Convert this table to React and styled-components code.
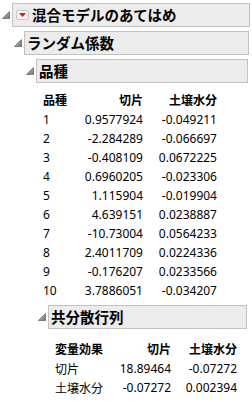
import React from "react";
import styled, { createGlobalStyle } from "styled-components";

const Global = createGlobalStyle`
  html, body { margin: 0; padding: 0; background: #ffffff; }
  body { font-family: "Noto Sans", "Noto Sans CJK JP", sans-serif; color: #000; }
`;

const Page = styled.div`
  width: 252px;
  box-sizing: border-box;
  padding: 3px 2px 0 0;
`;

const NodeWrap = styled.div`
  display: flex;
  align-items: flex-start;
  gap: 2px;
  padding-left: 2px;
  margin-top: ${(p) => p.$top || 0}px;
`;

const Disclosure = styled.div`
  flex: none;
  width: 8px;
  height: 24px;
  display: flex;
  align-items: center;
`;

const NodeBody = styled.div`
  flex: 1;
  min-width: 0;
`;

const Header = styled.div`
  height: 24px;
  box-sizing: border-box;
  border: 1px solid #c2c2c2;
  background: #ececec;
  display: flex;
  align-items: center;
  gap: 3px;
  padding-left: ${(p) => (p.$button ? 3 : 2)}px;
`;

const Title = styled.span`
  font-family: "Noto Sans CJK JP", sans-serif;
  font-weight: 700;
  font-size: 14.5px;
  line-height: 1;
  white-space: nowrap;
`;

const MenuBtn = styled.div`
  flex: none;
  width: 13px;
  height: 10px;
  box-sizing: border-box;
  border: 1px solid #c8c8c8;
  border-radius: 2px;
  background: #f6f6f6;
  display: flex;
  align-items: center;
  justify-content: center;
`;

const Content = styled.div`
  padding-top: 4px;
  padding-right: 1px;
`;

const Table = styled.div`
  display: grid;
  grid-template-columns: ${(p) => p.$cols};
  margin: ${(p) => p.$top}px 0 0 ${(p) => p.$left}px;
  font-size: 12px;
`;

const Cell = styled.div`
  height: ${(p) => (p.$h ? p.$h : 19)}px;
  display: flex;
  align-items: center;
  justify-content: ${(p) => (p.$right ? "flex-end" : "flex-start")};
  font-weight: ${(p) => (p.$head ? 700 : 400)};
  font-family: ${(p) =>
    p.$jp ? '"Noto Sans CJK JP", sans-serif' : '"Noto Sans", "Noto Sans CJK JP", sans-serif'};
  white-space: nowrap;
  line-height: 1;
`;

const Tri = () => (
  <svg width="8" height="8" viewBox="0 0 8 8">
    <defs>
      <linearGradient id="tg" x1="0" y1="0" x2="1" y2="1">
        <stop offset="0" stopColor="#d8d8d8" />
        <stop offset="1" stopColor="#6a6a6a" />
      </linearGradient>
    </defs>
    <polygon points="7.5,0.5 7.5,7.5 0.5,7.5" fill="url(#tg)" stroke="#7a7a7a" strokeWidth="1" strokeLinejoin="round" />
  </svg>
);

const RedTri = () => (
  <svg width="7" height="4" viewBox="0 0 7 4">
    <polygon points="0,0 7,0 3.5,4" fill="#d81e1e" />
  </svg>
);

const Node = ({ title, button, top, children }) => (
  <NodeWrap $top={top}>
    <Disclosure>
      <Tri />
    </Disclosure>
    <NodeBody>
      <Header $button={button}>
        {button && (
          <MenuBtn>
            <RedTri />
          </MenuBtn>
        )}
        <Title>{title}</Title>
      </Header>
      {children && <Content>{children}</Content>}
    </NodeBody>
  </NodeWrap>
);

const rows = [
  ["1", "0.9577924", "-0.049211"],
  ["2", "-2.284289", "-0.066697"],
  ["3", "-0.408109", "0.0672225"],
  ["4", "0.6960205", "-0.023306"],
  ["5", "1.115904", "-0.019904"],
  ["6", "4.639151", "0.0238887"],
  ["7", "-10.73004", "0.0564233"],
  ["8", "2.4011709", "0.0224336"],
  ["9", "-0.176207", "0.0233566"],
  ["10", "3.7886051", "-0.034207"],
];

const cov = [
  ["切片", "18.89464", "-0.07272"],
  ["土壌水分", "-0.07272", "0.002394"],
];

export default function App() {
  return (
    <Page>
      <Global />
      <Node title="混合モデルのあてはめ" button>
        <Node title="ランダム係数">
          <Node title="品種">
            <Table $cols="24px 76px 74px" $top={3} $left={7}>
              <Cell $head $jp $h={20}>品種</Cell>
              <Cell $head $jp $right $h={20}>切片</Cell>
              <Cell $head $jp $right $h={20}>土壌水分</Cell>
              {rows.map((r) => (
                <React.Fragment key={r[0]}>
                  <Cell>{r[0]}</Cell>
                  <Cell $right>{r[1]}</Cell>
                  <Cell $right>{r[2]}</Cell>
                </React.Fragment>
              ))}
            </Table>
            <Node title="共分散行列" top={5}>
              <Table $cols="47px 69px 66px" $top={5} $left={7}>
                <Cell $head $jp $h={21}>変量効果</Cell>
                <Cell $head $jp $right $h={21}>切片</Cell>
                <Cell $head $jp $right $h={21}>土壌水分</Cell>
                {cov.map((r) => (
                  <React.Fragment key={r[0]}>
                    <Cell $jp>{r[0]}</Cell>
                    <Cell $right>{r[1]}</Cell>
                    <Cell $right>{r[2]}</Cell>
                  </React.Fragment>
                ))}
              </Table>
            </Node>
          </Node>
        </Node>
      </Node>
    </Page>
  );
}
